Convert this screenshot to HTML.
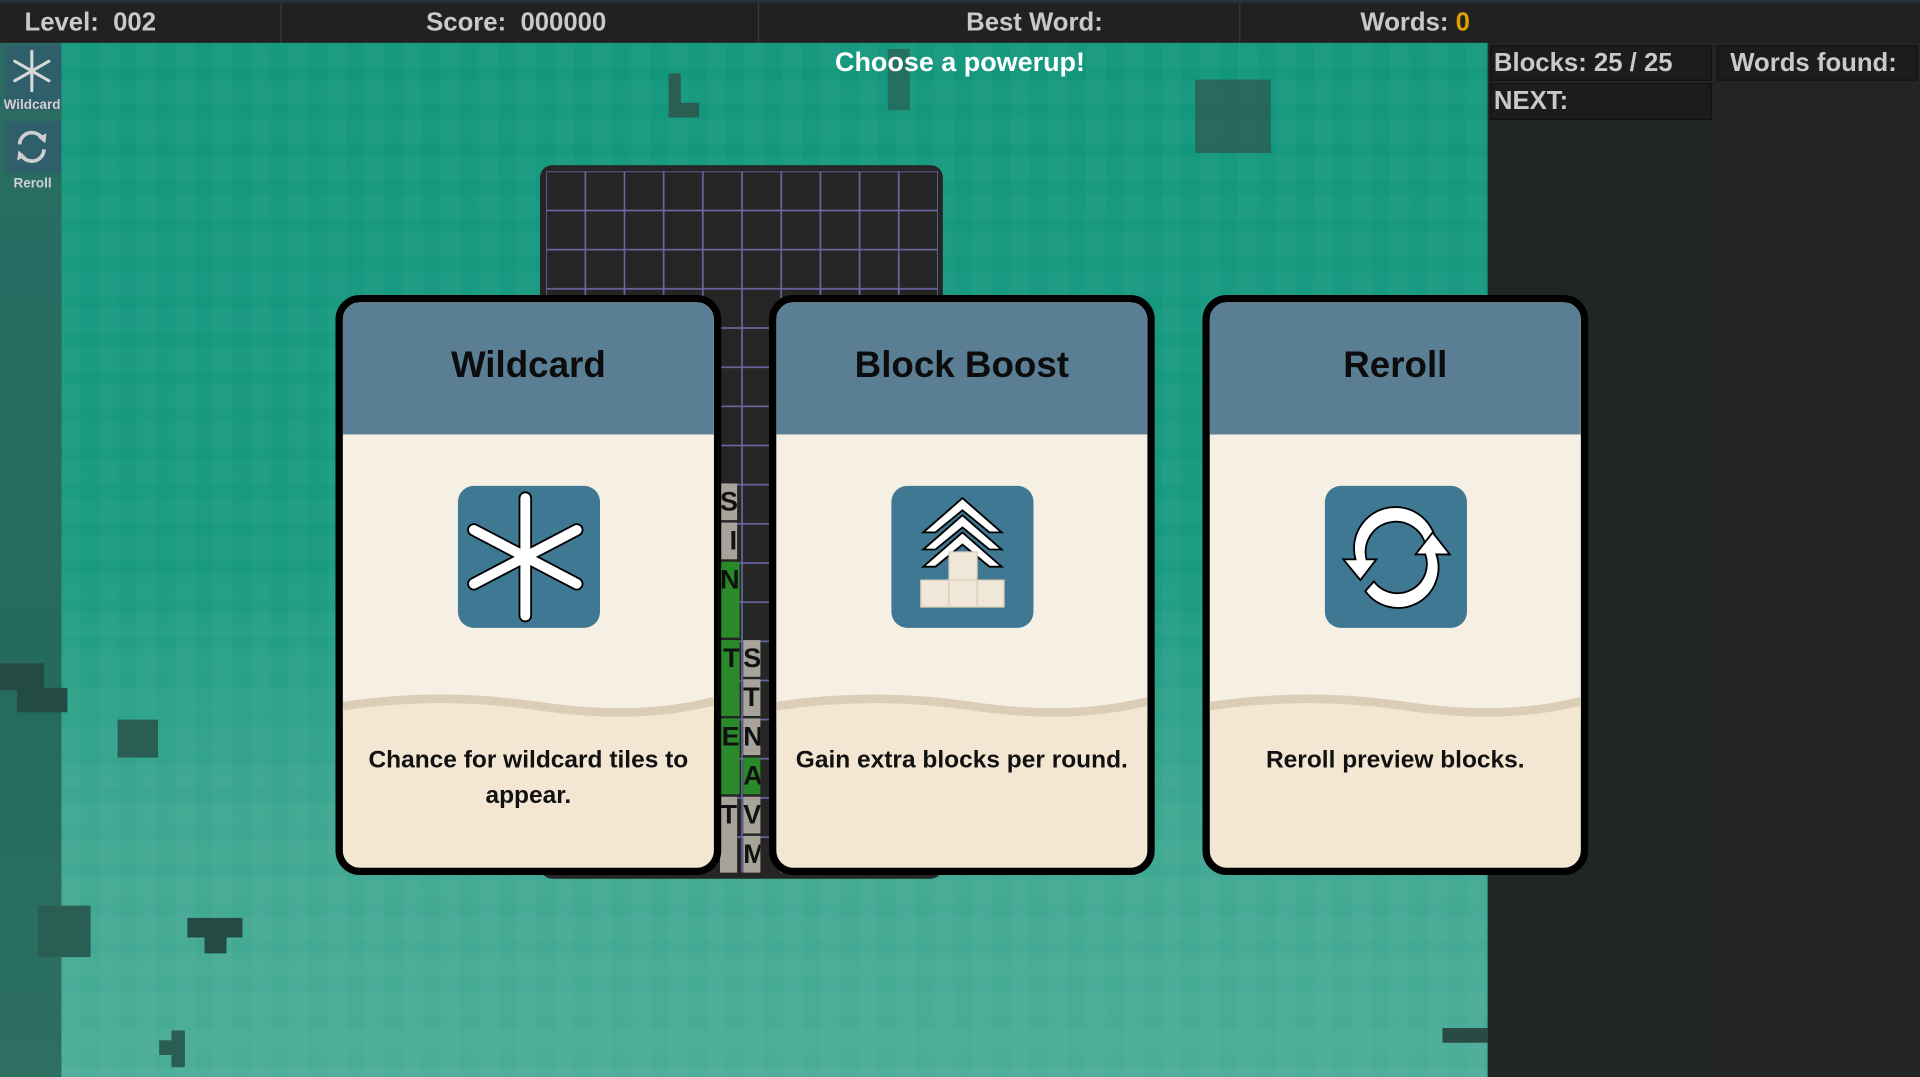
<!DOCTYPE html>
<html><head><meta charset="utf-8"><style>
html,body{margin:0;padding:0;width:1920px;height:1077px;overflow:hidden;background:#222;}
#w{position:absolute;left:0;top:0;width:1568px;height:880px;transform-origin:0 0;transform:scale(1.22449,1.22386);font-family:"Liberation Sans",sans-serif;font-weight:bold;}
.a{position:absolute;}
.top{left:0;top:0;width:1568px;height:35px;background:#212121;border-top:2px solid #2a3240;box-sizing:border-box;color:#c9c9c9;font-size:21px;}
.top span{position:absolute;top:5px;}
.sep{position:absolute;top:0;width:1px;height:35px;background:#3a3a3a;}
.field{left:50px;top:35px;width:1165px;height:845px;background:linear-gradient(#12977d 0%,#179a80 50%,#3ca690 75%,#4aac97 100%);}
.pat{left:50px;top:35px;width:1165px;height:845px;background-image:linear-gradient(90deg,rgba(255,255,255,0.05) 0 16px,transparent 16px 31px),linear-gradient(rgba(255,255,255,0.04) 0 20px,transparent 20px 31px);background-size:31px 31px;opacity:.55;}
.left{left:0;top:35px;width:50px;height:845px;background:linear-gradient(#2a6c63,#256a5f 60%,#2d6f63);}
.right{left:1215px;top:35px;width:353px;height:845px;background:#242424;}
.box{position:absolute;background:#1c1c1c;border:1px solid #111;color:#c9c9c9;font-size:21px;box-sizing:border-box;padding:2px 0 0 2px;}
.board{left:441px;top:135px;width:329px;height:583px;background:#252525;border-radius:10px;}
.card{position:absolute;top:241px;width:315px;height:474px;border:6px solid #000;border-radius:20px;box-sizing:border-box;overflow:hidden;background:#f3e6d3;}
.card .hd{position:absolute;left:0;top:0;width:100%;height:108px;background:#5a7f94;color:#0c0c0c;font-size:30px;text-align:center;line-height:104px;}
.card .bd{position:absolute;left:0;top:108px;width:100%;height:230px;background:#f5efe4;}
.card svg.wave{position:absolute;left:0;top:318px;width:100%;height:30px;}
.card .ic{position:absolute;left:94px;top:150px;width:116px;height:116px;border-radius:13px;background:#3e7893;}
.card .ds{position:absolute;left:8px;right:8px;top:360px;text-align:center;font-size:20px;line-height:29px;color:#111;}
.dk{position:absolute;background:#2a5e52;}
.t{position:absolute;font-size:22px;color:#111;line-height:30px;text-align:right;overflow:hidden;}
</style></head><body><div id="w">
<div class="a top">
<span style="left:20px">Level:&nbsp; 002</span>
<span style="left:348px">Score:&nbsp; 000000</span>
<span style="left:789px">Best Word:</span>
<span style="left:1111px">Words: <b style="color:#e0a000">0</b></span>
<div class="sep" style="left:229px"></div><div class="sep" style="left:619px"></div><div class="sep" style="left:1012px"></div>
</div>
<div class="a field"></div>
<div class="a pat"></div>
<div class="a left"></div>
<div class="a" style="left:4px;top:37px;width:46px;height:53px;background:#2f5f6a"></div>
<div class="a" style="left:4px;top:99px;width:46px;height:42px;background:#2f5f6a"></div>
<svg class="a" style="left:8px;top:40px" width="36" height="36" viewBox="0 0 36 36"><g stroke="#d8d8d8" stroke-width="2.5" stroke-linecap="round"><line x1="18" y1="2" x2="18" y2="34"/><line x1="4" y1="10" x2="32" y2="26"/><line x1="4" y1="26" x2="32" y2="10"/></g></svg>
<div class="a" style="left:3px;top:80px;font-size:11px;color:#d0d0d0">Wildcard</div>
<svg class="a" style="left:10px;top:104px" width="32" height="32" viewBox="0 0 32 32"><g fill="none" stroke="#cfcfcf" stroke-width="3"><path d="M6 14 A10 10 0 0 1 25 10"/><path d="M26 18 A10 10 0 0 1 7 22"/></g><path d="M21 8 L28 5 L27 13Z M11 24 L4 27 L5 19Z" fill="#cfcfcf"/></svg>
<div class="a" style="left:11px;top:144px;font-size:11px;color:#d0d0d0">Reroll</div>
<div class="dk" style="left:546px;top:60px;width:10px;height:36px"></div><div class="dk" style="left:546px;top:84px;width:25px;height:12px"></div>
<div class="dk" style="left:725px;top:40px;width:18px;height:50px;opacity:.7"></div>
<div class="dk" style="left:976px;top:65px;width:62px;height:60px;opacity:.8"></div>
<div class="dk" style="left:0;top:542px;width:36px;height:22px;background:#244a44"></div><div class="dk" style="left:14px;top:562px;width:41px;height:20px;background:#244a44"></div>
<div class="dk" style="left:96px;top:588px;width:33px;height:31px"></div>
<div class="dk" style="left:31px;top:740px;width:43px;height:42px"></div>
<div class="dk" style="left:153px;top:750px;width:45px;height:16px;background:#244a44"></div><div class="dk" style="left:167px;top:764px;width:18px;height:15px;background:#244a44"></div>
<div class="dk" style="left:140px;top:842px;width:11px;height:30px"></div><div class="dk" style="left:130px;top:850px;width:12px;height:12px"></div>
<div class="dk" style="left:1178px;top:840px;width:37px;height:12px;background:#2a4a44"></div>
<div class="a right"></div>
<div class="box" style="left:1217px;top:37px;width:181px;height:29px">Blocks: 25 / 25</div>
<div class="box" style="left:1402px;top:37px;width:164px;height:29px;padding-left:10px">Words found:</div>
<div class="box" style="left:1217px;top:68px;width:181px;height:30px">NEXT:</div>
<div class="a" style="left:1217px;top:100px;width:181px;height:780px;background:#1f2624"></div>
<div class="a" style="left:0;top:38px;width:1568px;text-align:center;color:#fff;font-size:22px">Choose a powerup!</div>
<div class="a board"><svg width="329" height="583" style="position:absolute;left:0;top:0"><defs><pattern id="g" x="5" y="5" width="32" height="32" patternUnits="userSpaceOnUse"><rect x="0" y="0" width="32" height="32" fill="none" stroke="#6b69a8" stroke-width="1.3"/></pattern></defs><rect x="5" y="5" width="320" height="573" fill="url(#g)"/></svg></div>
<div class="a" style="left:588px;top:395px;width:40px;height:320px">
<div class="t" style="left:0;top:0;width:14px;height:30px;background:#a8a39a">S</div>
<div class="t" style="left:0;top:32px;width:14px;height:30px;background:#a8a39a">I</div>
<div class="t" style="left:0;top:64px;width:16px;height:62px;background:#2a8a2a">N</div>
<div class="t" style="left:0;top:128px;width:16px;height:62px;background:#2a8a2a">T</div>
<div class="t" style="left:0;top:192px;width:16px;height:62px;background:#2a8a2a">E</div>
<div class="t" style="left:0;top:256px;width:14px;height:62px;background:#a8a39a">T</div>
<div class="t" style="left:19px;top:128px;width:14px;height:30px;background:#a8a39a;text-align:left">S</div>
<div class="t" style="left:19px;top:160px;width:14px;height:30px;background:#a8a39a;text-align:left">T</div>
<div class="t" style="left:19px;top:192px;width:14px;height:30px;background:#a8a39a;text-align:left">N</div>
<div class="t" style="left:19px;top:224px;width:14px;height:30px;background:#2a8a2a;text-align:left">A</div>
<div class="t" style="left:19px;top:256px;width:14px;height:30px;background:#a8a39a;text-align:left">V</div>
<div class="t" style="left:19px;top:288px;width:14px;height:30px;background:#a8a39a;text-align:left">M</div>
</div>

<div class="card" style="left:274px"><div class="hd">Wildcard</div><div class="bd"></div>
<svg class="wave" viewBox="0 0 303 30" preserveAspectRatio="none"><path d="M0 12 Q80 0 160 12 T303 8 L303 30 L0 30Z" fill="#f3e6d3"/><path d="M0 12 Q80 0 160 12 T303 8" fill="none" stroke="#dccdb6" stroke-width="7"/></svg>
<div class="ic"><svg width="116" height="116" viewBox="0 0 116 116"><g stroke-linecap="round"><g stroke="#000" stroke-width="11"><line x1="55" y1="10" x2="55" y2="106"/><line x1="13" y1="36" x2="97" y2="80"/><line x1="13" y1="80" x2="97" y2="36"/></g><g stroke="#fff" stroke-width="8"><line x1="55" y1="10" x2="55" y2="106"/><line x1="13" y1="36" x2="97" y2="80"/><line x1="13" y1="80" x2="97" y2="36"/></g></g></svg></div>
<div class="ds">Chance for wildcard tiles to appear.</div></div>

<div class="card" style="left:628px"><div class="hd">Block Boost</div><div class="bd"></div>
<svg class="wave" viewBox="0 0 303 30" preserveAspectRatio="none"><path d="M0 12 Q80 0 160 12 T303 8 L303 30 L0 30Z" fill="#f3e6d3"/><path d="M0 12 Q80 0 160 12 T303 8" fill="none" stroke="#dccdb6" stroke-width="7"/></svg>
<div class="ic"><svg width="116" height="116" viewBox="0 0 116 116"><g fill="#fff" stroke="#000" stroke-width="1.5"><path d="M58 38 L90 66 L80 66 L58 48 L36 66 L26 66Z"/><path d="M58 24 L90 52 L80 52 L58 34 L36 52 L26 52Z"/><path d="M58 10 L90 38 L80 38 L58 20 L36 38 L26 38Z"/></g><g fill="#f0e7d8" stroke="#d8ccb8" stroke-width="1"><rect x="47" y="54" width="23" height="23"/><rect x="24" y="77" width="23" height="22"/><rect x="47" y="77" width="23" height="22"/><rect x="70" y="77" width="22" height="22"/></g></svg></div>
<div class="ds">Gain extra blocks per round.</div></div>

<div class="card" style="left:982px"><div class="hd">Reroll</div><div class="bd"></div>
<svg class="wave" viewBox="0 0 303 30" preserveAspectRatio="none"><path d="M0 12 Q80 0 160 12 T303 8 L303 30 L0 30Z" fill="#f3e6d3"/><path d="M0 12 Q80 0 160 12 T303 8" fill="none" stroke="#dccdb6" stroke-width="7"/></svg>
<div class="ic"><svg width="116" height="116" viewBox="0 0 116 116"><g fill="#fff" stroke="#000" stroke-width="1.5"><path d="M25 60 A33 33 0 0 1 90 42 L82 48 A24 24 0 0 0 34 60 L42 60 L29 77 L15 60Z"/><path d="M91 56 A33 33 0 0 1 33 86 L40 78 A24 24 0 0 0 82 56 L74 56 L88 38 L102 56Z"/></g></svg></div>
<div class="ds">Reroll preview blocks.</div></div>
</div></body></html>
